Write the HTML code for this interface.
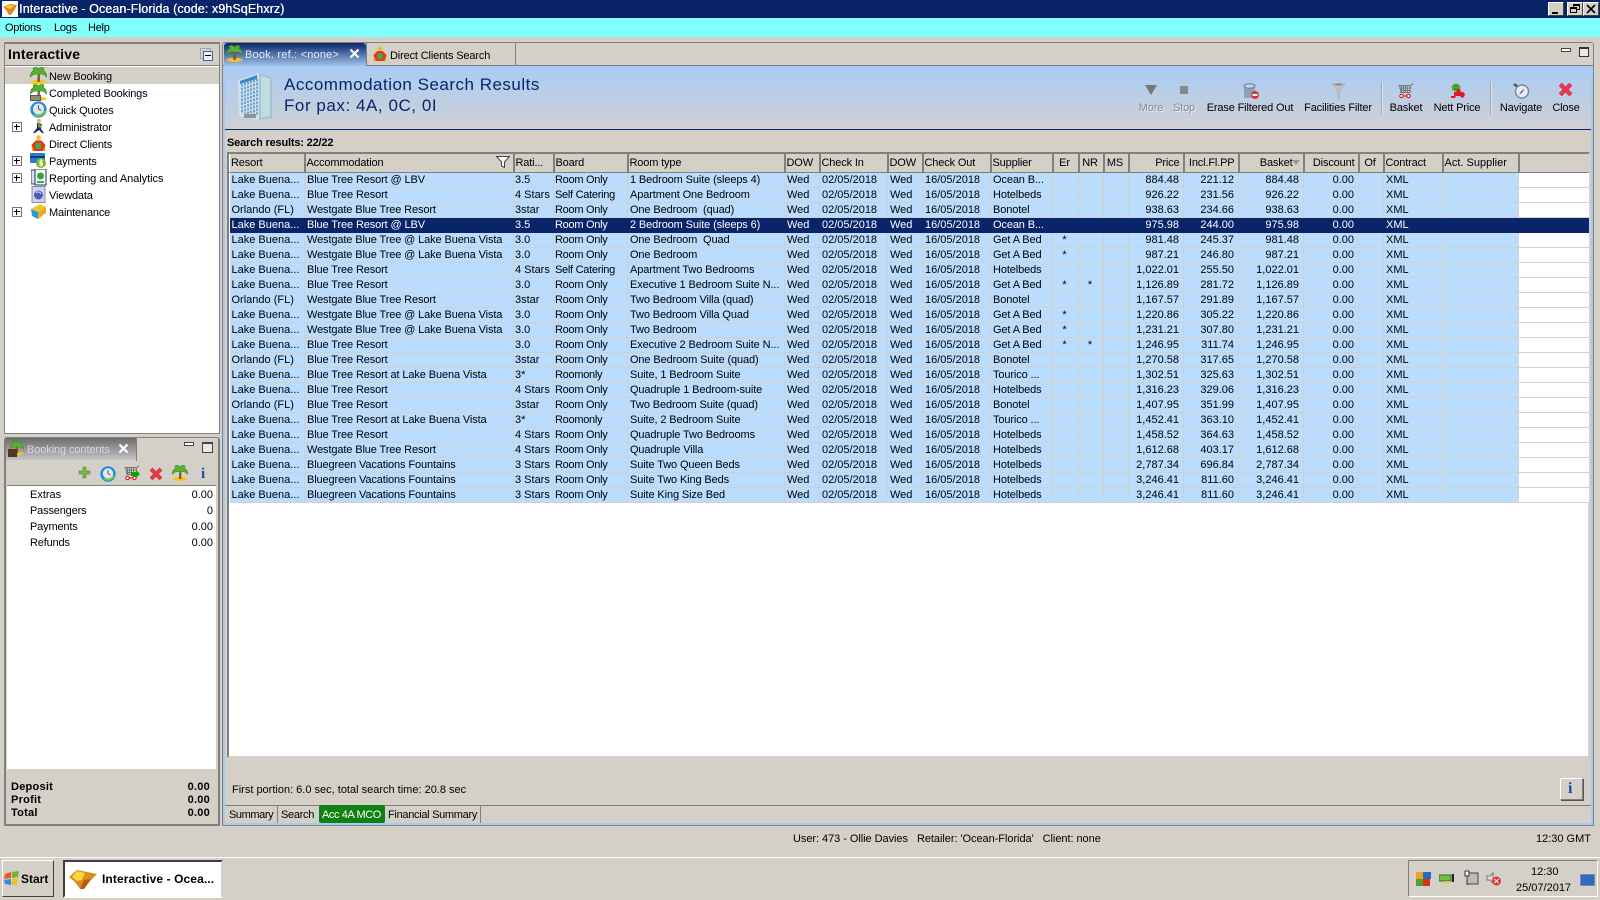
<!DOCTYPE html>
<html><head><meta charset="utf-8"><title>Interactive</title>
<style>
*{box-sizing:border-box}
html,body{margin:0;padding:0}
body{width:1600px;height:900px;overflow:hidden;background:#d4d0c8;position:relative;font:11px "Liberation Sans",sans-serif;color:#000}
.a{position:absolute;white-space:pre;line-height:14px;margin-top:1px}
.m{margin-top:0}
.t{letter-spacing:-.17px}
.i{position:absolute}
#g{position:absolute;left:229px;top:154px;width:1359px;border-collapse:collapse;table-layout:fixed;font-size:11px}
#g th{height:18px;padding:1px 0 0 1px;font-weight:normal;text-align:left;background:#d4d0c8;border-right:2px solid #808080;border-left:1px solid #fff;border-bottom:1px solid #808080;white-space:nowrap;overflow:hidden;letter-spacing:-.15px}
#g th.r{text-align:right;padding:1px 3px 0 0}
#g th.c{text-align:center;padding:1px 2px 0 0}
#g td{height:15px;padding:1px 0 0 2px;line-height:13px;background:#b9dcff;border-right:1px solid #d4d0c8;border-bottom:1px solid #d4d0c8;white-space:pre;overflow:hidden}
#g td:nth-child(2),#g td:nth-child(5),#g td:nth-child(10){letter-spacing:-.12px}
#g td:nth-child(4){letter-spacing:-.28px}
#g td:nth-child(3),#g td:nth-child(4){padding-left:1px}
#g td.r{text-align:right;padding:1px 4px 0 0}
#g td.c{text-align:center;padding:1px 2px 0 0}
#g td.w{background:#fff;border-right:0}
#g tr.s td{background:#0a246a;color:#fff;border-color:#0a246a}
.tb{position:absolute;top:101px;text-align:center;line-height:14px;transform:translateX(-50%);white-space:nowrap;letter-spacing:-.15px}
.dis{color:#8a8a8a;text-shadow:1px 1px 0 #eee}
.pl{position:absolute;left:12px;width:10px;height:10px;border:1px solid #777;background:#fff}
.pl:before{content:"";position:absolute;left:1px;top:3px;width:6px;height:1px;background:#000}
.pl:after{content:"";position:absolute;left:3px;top:1px;width:1px;height:6px;background:#000}
</style></head>
<body>
<svg width="0" height="0" style="position:absolute">
<defs>
<symbol id="palm" viewBox="0 0 16 16"><ellipse cx="8" cy="14" rx="7.500" ry="1.900" fill="#f5c518"/><path d="M7.300 6 L9.200 6 L9.500 14 H6.800 Z" fill="#8a5a20"/><path d="M8 7 C5 6 2 7 0.500 9.500 C0 6 2 3.500 4 3 C2.500 2 2.500 1 4 0.500 C6 0 7.500 1 8 2 C8.500 1 10 0 12 0.500 C13.500 1 13.500 2 12 3 C14 3.500 16 6 15.500 9.500 C14 7 11 6 8 7Z" fill="#58b030" stroke="#2d7a18" stroke-width=".5"/></symbol>
<symbol id="clock" viewBox="0 0 16 16"><circle cx="8" cy="8" r="7.700" fill="#1e8fe0"/><circle cx="8" cy="7.500" r="5.200" fill="#e4e8ee"/><path d="M8 4V7.500L10.500 9" stroke="#555" fill="none"/><path d="M3 13 C7 16 13 15 15.500 9 L12.500 10 C11 12.500 8 13 6 12Z" fill="#7cc544"/></symbol>
<symbol id="client" viewBox="0 0 16 16"><circle cx="8" cy="2.500" r="2.200" fill="#f5b820"/><path d="M1.500 9 L5.500 5 H10.500 L14.500 9 L13 15 H3Z" fill="#e23a12"/><path d="M5.500 7.500H10.500V13H5.500Z" fill="#3dab50"/><path d="M1.500 9L4 15H2Z M14.500 9L12 15H14Z" fill="#f59a12"/></symbol>
<symbol id="x" viewBox="0 0 16 16"><path d="M1 4 L4 1 L8 5 L12 1 L15 4 L11 8 L15 12 L12 15 L8 11 L4 15 L1 12 L5 8Z" fill="#e8384a" stroke="#c02838" stroke-width=".5"/></symbol>
<symbol id="cart" viewBox="0 0 16 16"><path d="M0.500 2.500H12.500L15 .5M1.500 2.500L3 9.500H12L12.500 2.500M3.500 2.500V9.500M5.500 2.500V9.500M7.500 2.500V9.500M9.500 2.500V9.500M2 5H12.500M2.500 7.500H12.500" stroke="#777" fill="none"/><circle cx="3.500" cy="13" r="1.700" fill="#fff" stroke="#d00"/><circle cx="10.500" cy="13" r="1.700" fill="#fff" stroke="#d00"/><path d="M5 13H9" stroke="#d00"/></symbol>
</defs>
</svg>

<!-- title bar -->
<div class="i" style="left:0;top:0;width:1600px;height:18px;background:#0a246a"></div>
<div class="i" style="left:2px;top:1px;width:16px;height:16px;background:#fff"></div>
<svg class="i" style="left:2px;top:2px" width="16" height="14" viewBox="0 0 16 14"><path d="M1 5 L8 2 L15 3 L13 7 L9 13 H7 L4 8Z" fill="#e08a20"/><path d="M3 5L8 3L12 4L8 7Z" fill="#f8d040"/></svg>
<div class="a m" style="left:19px;top:2px;color:#fff;font-size:12.5px;letter-spacing:.09px;text-shadow:.3px 0 0 #fff">Interactive - Ocean-Florida (code: x9hSqEhxrz)</div>
<div class="i" style="left:1548px;top:2px;width:16px;height:14px;background:#d4d0c8;border:1px solid;border-color:#fff #404040 #404040 #fff"><div class="i" style="left:3px;top:9px;width:6px;height:2px;background:#000"></div></div>
<div class="i" style="left:1567px;top:2px;width:16px;height:14px;background:#d4d0c8;border:1px solid;border-color:#fff #404040 #404040 #fff"><div class="i" style="left:5px;top:1px;width:7px;height:6px;border:1px solid #000;border-top-width:2px"></div><div class="i" style="left:2px;top:4px;width:7px;height:6px;border:1px solid #000;border-top-width:2px;background:#d4d0c8"></div></div>
<div class="i" style="left:1583px;top:2px;width:16px;height:14px;background:#d4d0c8;border:1px solid;border-color:#fff #404040 #404040 #fff"><svg class="i" style="left:2px;top:1px" width="10" height="10"><path d="M1 1L9 9M9 1L1 9" stroke="#000" stroke-width="1.600"/></svg></div>

<!-- menu -->
<div class="i" style="left:0;top:18px;width:1600px;height:19px;background:#80ffff"></div>
<div class="a m" style="left:5px;top:21px;letter-spacing:-.25px">Options</div>
<div class="a m" style="left:54px;top:21px;letter-spacing:-.25px">Logs</div>
<div class="a m" style="left:88px;top:21px;letter-spacing:-.25px">Help</div>

<!-- left panel -->
<div class="i" style="left:4px;top:42px;width:216px;height:392px;border:1px solid #808080;border-width:2px 1px 1px 1px;background:#fff"></div>
<div class="i" style="left:5px;top:44px;width:214px;height:22px;background:#d4d0c8;border-bottom:1px solid #808080"></div>
<div class="a m" style="left:8px;top:47px;font-size:14px;font-weight:bold;line-height:15px;letter-spacing:.2px">Interactive</div>
<div class="i" style="left:200px;top:48px;width:11px;height:11px;border:1px solid #9ab"></div>
<div class="i" style="left:203px;top:51px;width:10px;height:10px;border:1px solid #468;background:#eef"><div class="i" style="left:1px;top:3px;width:6px;height:1px;background:#000"></div></div>
<div class="i" style="left:5px;top:67px;width:214px;height:17px;background:#d4d0c8"></div>
<svg class="i" style="left:30px;top:67px" width="17" height="17"><use href="#palm"/></svg>
<div class="a t" style="left:49px;top:69px">New Booking</div>
<svg class="i" style="left:30px;top:84px" width="17" height="17"><use href="#palm"/></svg>
<div class="i" style="left:30px;top:95px;width:11px;height:6px;background:#8a9070;border:1px solid #556"></div>
<div class="a t" style="left:49px;top:86px">Completed Bookings</div>
<svg class="i" style="left:30px;top:101px" width="17" height="17"><use href="#clock"/></svg>
<div class="a t" style="left:49px;top:103px">Quick Quotes</div>
<svg class="i" style="left:32px;top:118px" width="15" height="17" viewBox="0 0 15 17"><circle cx="7" cy="3" r="2" fill="#e8b060"/><path d="M5 5L10 6L9 11L12 15H10L7 12L3 15H1L5 10Z" fill="#1a2a6a"/><path d="M6 6L10 7L9 10L6 9Z" fill="#8a9a20"/></svg>
<div class="a t" style="left:49px;top:120px">Administrator</div>
<svg class="i" style="left:30px;top:135px" width="17" height="17"><use href="#client"/></svg>
<div class="a t" style="left:49px;top:137px">Direct Clients</div>
<svg class="i" style="left:30px;top:152px" width="17" height="17" viewBox="0 0 17 17"><rect x="0" y="1" width="15" height="10" rx="1" fill="#2a78d8"/><rect x="0" y="4" width="15" height="2" fill="#143a80"/><circle cx="11" cy="11" r="5" fill="#7ab828"/><path d="M11 7V15M13 9H10V11H12.500V13H9" stroke="#fff" fill="none"/></svg>
<div class="a t" style="left:49px;top:154px">Payments</div>
<svg class="i" style="left:31px;top:169px" width="16" height="17" viewBox="0 0 16 17"><rect x="0" y="1" width="9" height="14" fill="#dde" stroke="#345"/><rect x="4" y="0" width="11" height="16" fill="#fff" stroke="#234"/><circle cx="9.500" cy="7" r="3.500" fill="#2ca83a"/><rect x="6" y="12" width="7" height="2" fill="#3a7"/></svg>
<div class="a t" style="left:49px;top:171px;letter-spacing:-.05px">Reporting and Analytics</div>
<svg class="i" style="left:31px;top:186px" width="15" height="17" viewBox="0 0 15 17"><rect x="1" y="0.500" width="13" height="16" fill="#cdd6e8" stroke="#88a"/><circle cx="7.500" cy="9" r="4.500" fill="#4a58c0"/><path d="M5 7C7 5 9 6 10 8" stroke="#cde" fill="none"/></svg>
<div class="a t" style="left:49px;top:188px">Viewdata</div>
<svg class="i" style="left:30px;top:203px" width="17" height="17" viewBox="0 0 17 17"><path d="M1 6L10 1L16 4L8 9Z" fill="#f2c42c"/><path d="M1 6L8 9V16L2 13Z" fill="#2a9ad8"/><path d="M8 9L16 4V10L8 16Z" fill="#e8a828"/></svg>
<div class="a t" style="left:49px;top:205px">Maintenance</div>
<div class="pl" style="top:122px"></div>
<div class="pl" style="top:156px"></div>
<div class="pl" style="top:173px"></div>
<div class="pl" style="top:207px"></div>

<!-- booking contents panel -->
<div class="i" style="left:4px;top:437px;width:216px;height:389px;border:1px solid #808080;border-width:1px 2px 2px 2px;border-radius:3px 3px 0 0;background:#d4d0c8"></div>
<div class="i" style="left:6px;top:438px;width:130px;height:22px;background:linear-gradient(#6c6c6c,#c4c4c4)"></div>
<div class="i" style="left:136px;top:438px;width:1px;height:23px;background:#808080"></div>
<svg class="i" style="left:7px;top:441px" width="17" height="17" viewBox="0 0 17 17"><use href="#palm" width="14" height="14" x="3"/><rect x="1" y="8" width="9" height="8" fill="#5a3420"/></svg>
<div class="a" style="left:27px;top:442px;color:#d8d8d8;letter-spacing:-.1px">Booking contents</div>
<svg class="i" style="left:118px;top:443px" width="11" height="11"><path d="M1.500 1.500L9.500 9.500M9.500 1.500L1.500 9.500" stroke="#fff" stroke-width="2.200"/></svg>
<div class="i" style="left:184px;top:442px;width:10px;height:4px;border:1px solid #444;background:#fff"></div>
<div class="i" style="left:202px;top:442px;width:11px;height:11px;border:1px solid #444;border-top-width:2px;background:#e8e8e8"></div>
<div class="i" style="left:7px;top:461px;width:209px;height:25px;background:#d4d0c8;border-bottom:1px solid #808080"></div>
<svg class="i" style="left:78px;top:466px" width="13" height="13"><path d="M5 1H8V5H12V8H8V12H5V8H1V5H5Z" fill="#7ab648" stroke="#4a8a30" stroke-width=".6"/></svg>
<svg class="i" style="left:100px;top:466px" width="16" height="16"><use href="#clock"/></svg>
<svg class="i" style="left:124px;top:465px" width="16" height="16"><use href="#cart"/></svg>
<svg class="i" style="left:131px;top:470px" width="9" height="8"><path d="M0 2H5V0L9 4L5 8V6H0Z" fill="#0a0"/></svg>
<svg class="i" style="left:149px;top:467px" width="14" height="14"><use href="#x"/></svg>
<svg class="i" style="left:172px;top:465px" width="16" height="16"><use href="#palm"/></svg>
<div class="a m" style="left:201px;top:466px;color:#1050a0;font:bold 15px 'Liberation Serif',serif;line-height:16px">i</div>
<div class="i" style="left:7px;top:486px;width:209px;height:283px;background:#fff"></div>
<div class="a" style="left:30px;top:487px">Extras</div><div class="a" style="right:1387px;top:487px">0.00</div>
<div class="a t" style="left:30px;top:503px">Passengers</div><div class="a" style="right:1387px;top:503px">0</div>
<div class="a t" style="left:30px;top:519px">Payments</div><div class="a" style="right:1387px;top:519px">0.00</div>
<div class="a t" style="left:30px;top:535px">Refunds</div><div class="a" style="right:1387px;top:535px">0.00</div>
<div class="a" style="left:11px;top:779px;font-weight:bold;letter-spacing:.25px">Deposit</div><div class="a" style="right:1390px;top:779px;font-weight:bold;letter-spacing:.25px">0.00</div>
<div class="a" style="left:11px;top:792px;font-weight:bold;letter-spacing:.25px">Profit</div><div class="a" style="right:1390px;top:792px;font-weight:bold;letter-spacing:.25px">0.00</div>
<div class="a" style="left:11px;top:805px;font-weight:bold;letter-spacing:.25px">Total</div><div class="a" style="right:1390px;top:805px;font-weight:bold;letter-spacing:.25px">0.00</div>

<!-- main panel -->
<div class="i" style="left:222px;top:42px;width:1372px;height:784px;border:1px solid #808080;border-radius:3px 3px 0 0;background:#d4d0c8"></div>
<div class="i" style="left:223px;top:66px;width:2px;height:759px;background:#a6caf0"></div>
<div class="i" style="left:1591px;top:66px;width:2px;height:759px;background:#a6caf0"></div>
<div class="i" style="left:223px;top:823px;width:1370px;height:2px;background:#a6caf0"></div>
<div class="i" style="left:223px;top:65px;width:1370px;height:1px;background:#808080"></div>
<!-- tabs -->
<div class="i" style="left:224px;top:43px;width:142px;height:24px;background:linear-gradient(#0a246a,#a6caf0);border-radius:3px 3px 0 0"></div>
<svg class="i" style="left:226px;top:45px" width="17" height="17"><use href="#palm"/></svg>
<div class="a m" style="left:245px;top:48px;color:#e8eef8;letter-spacing:.2px">Book. ref.: &lt;none&gt;</div>
<svg class="i" style="left:349px;top:48px" width="11" height="11"><path d="M1.500 1.500L9.500 9.500M9.500 1.500L1.500 9.500" stroke="#fff" stroke-width="2.200"/></svg>
<div class="i" style="left:366px;top:43px;width:150px;height:22px;border-right:1px solid #808080;border-left:1px solid #808080"></div>
<svg class="i" style="left:372px;top:46px" width="16" height="16"><use href="#client"/></svg>
<div class="a" style="left:390px;top:48px;letter-spacing:-.15px">Direct Clients Search</div>
<div class="i" style="left:1561px;top:48px;width:10px;height:4px;border:1px solid #444;background:#fff"></div>
<div class="i" style="left:1579px;top:47px;width:10px;height:10px;border:1px solid #333;border-top-width:2px;background:#e8e8e8"></div>
<!-- header band -->
<div class="i" style="left:225px;top:66px;width:1366px;height:63px;background:linear-gradient(#a8ccf6,#d0d0d4)"></div>
<div class="i" style="left:225px;top:129px;width:1366px;height:1px;background:#0a246a"></div>
<svg class="i" style="left:237px;top:73px" width="36" height="48" viewBox="0 0 36 48"><path d="M1 7 L22 0 V47 L2 43Z" fill="#d4e0e8"/><path d="M22 0 L35 4 V45 L22 47Z" fill="#a8c4cc"/><path d="M24 3L33 6V43L24 45Z" fill="#c0dce0"/><path d="M3 8L20 2V6L3 11Z" fill="#3a8ac8"/><g stroke="#4a94cc" stroke-width="1.500" stroke-dasharray="2.500 1.200"><path d="M5 11V40M8 10V41M11 9V41M14 8V42M17 7V42M20 6V43"/></g><path d="M7 41H19V45H7Z" fill="#8a96a0"/></svg>
<div class="a m" style="left:284px;top:75px;font-size:17px;line-height:20px;color:#0a246a;letter-spacing:.5px">Accommodation Search Results</div>
<div class="a" style="left:284px;top:95px;font-size:17px;line-height:20px;color:#0a246a;letter-spacing:.55px">For pax: 4A, 0C, 0I</div>

<svg class="i" style="left:1145px;top:85px" width="12" height="11"><path d="M0 0H12L9 5L6 10L3 5Z" fill="#777"/></svg>
<div class="tb dis" style="left:1151px">More</div>
<div class="i" style="left:1180px;top:86px;width:8px;height:8px;background:#888"></div>
<div class="tb dis" style="left:1184px">Stop</div>
<svg class="i" style="left:1243px;top:83px" width="16" height="17"><path d="M1 3H12V15H1Z" fill="#8aa4b8"/><ellipse cx="6.500" cy="3" rx="5.500" ry="2.200" fill="#b8d4e4" stroke="#778"/><circle cx="12" cy="12" r="4" fill="#e03030"/><rect x="9.500" y="11" width="5" height="2" fill="#fff"/></svg>
<div class="tb" style="left:1250px">Erase Filtered Out</div>
<svg class="i" style="left:1332px;top:83px" width="13" height="17"><path d="M0 0H13L8 7L7 16H6L5 7Z" fill="#c4c4c4" stroke="#a0a0a0" stroke-width=".6"/><ellipse cx="6.500" cy="1.500" rx="4" ry="1" fill="#888"/></svg>
<div class="tb" style="left:1338px">Facilities Filter</div>
<div class="i" style="left:1381px;top:82px;width:2px;height:32px;background:linear-gradient(90deg,#889,#fff)"></div>
<svg class="i" style="left:1398px;top:83px" width="16" height="16"><use href="#cart"/></svg>
<div class="tb" style="left:1406px">Basket</div>
<svg class="i" style="left:1450px;top:83px" width="16" height="16" viewBox="0 0 16 16"><ellipse cx="6" cy="4.500" rx="4.500" ry="4" fill="#5aa83a"/><path d="M4 3H8M4 6H8" stroke="#2a702a"/><path d="M1 13H4V9H6L8 6H10L11 9H13L15 11L14 14L12 15L10 13H6L5 15H1Z" fill="#e01828"/></svg>
<div class="tb" style="left:1457px">Nett Price</div>
<div class="i" style="left:1490px;top:82px;width:2px;height:32px;background:linear-gradient(90deg,#889,#fff)"></div>
<svg class="i" style="left:1513px;top:83px" width="17" height="17" viewBox="0 0 17 17"><path d="M1 1L5 4" stroke="#555" stroke-width="2.500"/><circle cx="9" cy="8.500" r="6.500" fill="#e4eef6" stroke="#7a8a98" stroke-width="1.500"/><path d="M6 12L8.500 8L12 5L9.500 9Z" fill="#d03020"/><path d="M6 12L8.500 8L9.500 9Z" fill="#2050c0"/></svg>
<div class="tb" style="left:1521px">Navigate</div>
<svg class="i" style="left:1558px;top:82px" width="15" height="15"><use href="#x"/></svg>
<div class="tb" style="left:1566px">Close</div>

<div class="a" style="left:227px;top:135px;font-weight:bold;letter-spacing:-.18px">Search results: 22/22</div>

<!-- grid -->
<div class="i" style="left:227px;top:152px;width:1363px;height:606px;background:#fff;border:2px solid;border-color:#808080 #d4d0c8 #d4d0c8 #808080"></div>
<table id="g">
<colgroup><col style="width:75px"><col style="width:209px"><col style="width:40px"><col style="width:74px"><col style="width:157px"><col style="width:35px"><col style="width:68px"><col style="width:35px"><col style="width:68px"><col style="width:62px"><col style="width:26px"><col style="width:25px"><col style="width:25px"><col style="width:55px"><col style="width:55px"><col style="width:65px"><col style="width:55px"><col style="width:25px"><col style="width:59px"><col style="width:76px"><col style="width:70px"></colgroup>
<tr><th>Resort</th><th>Accommodation</th><th>Rati...</th><th>Board</th><th>Room type</th><th>DOW</th><th>Check In</th><th>DOW</th><th>Check Out</th><th>Supplier</th><th class="c">Er</th><th class="c">NR</th><th class="c">MS</th><th class="r">Price</th><th class="r">Incl.Fl.PP</th><th class="r" style="padding-right:10px">Basket</th><th class="r">Discount</th><th class="c">Of</th><th>Contract</th><th style="letter-spacing:0">Act. Supplier</th><th style="border-right:0"></th></tr>
<tr><td>Lake Buena...</td><td>Blue Tree Resort @ LBV</td><td>3.5</td><td>Room Only</td><td>1 Bedroom Suite (sleeps 4)</td><td>Wed</td><td>02/05/2018</td><td>Wed</td><td>16/05/2018</td><td>Ocean B...</td><td class="c"></td><td class="c"></td><td></td><td class="r">884.48</td><td class="r">221.12</td><td class="r">884.48</td><td class="r">0.00</td><td></td><td>XML</td><td></td><td class="w"></td></tr>
<tr><td>Lake Buena...</td><td>Blue Tree Resort</td><td>4 Stars</td><td>Self Catering</td><td>Apartment One Bedroom</td><td>Wed</td><td>02/05/2018</td><td>Wed</td><td>16/05/2018</td><td>Hotelbeds</td><td class="c"></td><td class="c"></td><td></td><td class="r">926.22</td><td class="r">231.56</td><td class="r">926.22</td><td class="r">0.00</td><td></td><td>XML</td><td></td><td class="w"></td></tr>
<tr><td>Orlando (FL)</td><td>Westgate Blue Tree Resort</td><td>3star</td><td>Room Only</td><td>One Bedroom  (quad)</td><td>Wed</td><td>02/05/2018</td><td>Wed</td><td>16/05/2018</td><td>Bonotel</td><td class="c"></td><td class="c"></td><td></td><td class="r">938.63</td><td class="r">234.66</td><td class="r">938.63</td><td class="r">0.00</td><td></td><td>XML</td><td></td><td class="w"></td></tr>
<tr class="s"><td>Lake Buena...</td><td>Blue Tree Resort @ LBV</td><td>3.5</td><td>Room Only</td><td>2 Bedroom Suite (sleeps 6)</td><td>Wed</td><td>02/05/2018</td><td>Wed</td><td>16/05/2018</td><td>Ocean B...</td><td class="c"></td><td class="c"></td><td></td><td class="r">975.98</td><td class="r">244.00</td><td class="r">975.98</td><td class="r">0.00</td><td></td><td>XML</td><td></td><td class="w"></td></tr>
<tr><td>Lake Buena...</td><td>Westgate Blue Tree @ Lake Buena Vista</td><td>3.0</td><td>Room Only</td><td>One Bedroom  Quad</td><td>Wed</td><td>02/05/2018</td><td>Wed</td><td>16/05/2018</td><td>Get A Bed</td><td class="c">*</td><td class="c"></td><td></td><td class="r">981.48</td><td class="r">245.37</td><td class="r">981.48</td><td class="r">0.00</td><td></td><td>XML</td><td></td><td class="w"></td></tr>
<tr><td>Lake Buena...</td><td>Westgate Blue Tree @ Lake Buena Vista</td><td>3.0</td><td>Room Only</td><td>One Bedroom</td><td>Wed</td><td>02/05/2018</td><td>Wed</td><td>16/05/2018</td><td>Get A Bed</td><td class="c">*</td><td class="c"></td><td></td><td class="r">987.21</td><td class="r">246.80</td><td class="r">987.21</td><td class="r">0.00</td><td></td><td>XML</td><td></td><td class="w"></td></tr>
<tr><td>Lake Buena...</td><td>Blue Tree Resort</td><td>4 Stars</td><td>Self Catering</td><td>Apartment Two Bedrooms</td><td>Wed</td><td>02/05/2018</td><td>Wed</td><td>16/05/2018</td><td>Hotelbeds</td><td class="c"></td><td class="c"></td><td></td><td class="r">1,022.01</td><td class="r">255.50</td><td class="r">1,022.01</td><td class="r">0.00</td><td></td><td>XML</td><td></td><td class="w"></td></tr>
<tr><td>Lake Buena...</td><td>Blue Tree Resort</td><td>3.0</td><td>Room Only</td><td>Executive 1 Bedroom Suite N...</td><td>Wed</td><td>02/05/2018</td><td>Wed</td><td>16/05/2018</td><td>Get A Bed</td><td class="c">*</td><td class="c">*</td><td></td><td class="r">1,126.89</td><td class="r">281.72</td><td class="r">1,126.89</td><td class="r">0.00</td><td></td><td>XML</td><td></td><td class="w"></td></tr>
<tr><td>Orlando (FL)</td><td>Westgate Blue Tree Resort</td><td>3star</td><td>Room Only</td><td>Two Bedroom Villa (quad)</td><td>Wed</td><td>02/05/2018</td><td>Wed</td><td>16/05/2018</td><td>Bonotel</td><td class="c"></td><td class="c"></td><td></td><td class="r">1,167.57</td><td class="r">291.89</td><td class="r">1,167.57</td><td class="r">0.00</td><td></td><td>XML</td><td></td><td class="w"></td></tr>
<tr><td>Lake Buena...</td><td>Westgate Blue Tree @ Lake Buena Vista</td><td>3.0</td><td>Room Only</td><td>Two Bedroom Villa Quad</td><td>Wed</td><td>02/05/2018</td><td>Wed</td><td>16/05/2018</td><td>Get A Bed</td><td class="c">*</td><td class="c"></td><td></td><td class="r">1,220.86</td><td class="r">305.22</td><td class="r">1,220.86</td><td class="r">0.00</td><td></td><td>XML</td><td></td><td class="w"></td></tr>
<tr><td>Lake Buena...</td><td>Westgate Blue Tree @ Lake Buena Vista</td><td>3.0</td><td>Room Only</td><td>Two Bedroom</td><td>Wed</td><td>02/05/2018</td><td>Wed</td><td>16/05/2018</td><td>Get A Bed</td><td class="c">*</td><td class="c"></td><td></td><td class="r">1,231.21</td><td class="r">307.80</td><td class="r">1,231.21</td><td class="r">0.00</td><td></td><td>XML</td><td></td><td class="w"></td></tr>
<tr><td>Lake Buena...</td><td>Blue Tree Resort</td><td>3.0</td><td>Room Only</td><td>Executive 2 Bedroom Suite N...</td><td>Wed</td><td>02/05/2018</td><td>Wed</td><td>16/05/2018</td><td>Get A Bed</td><td class="c">*</td><td class="c">*</td><td></td><td class="r">1,246.95</td><td class="r">311.74</td><td class="r">1,246.95</td><td class="r">0.00</td><td></td><td>XML</td><td></td><td class="w"></td></tr>
<tr><td>Orlando (FL)</td><td>Blue Tree Resort</td><td>3star</td><td>Room Only</td><td>One Bedroom Suite (quad)</td><td>Wed</td><td>02/05/2018</td><td>Wed</td><td>16/05/2018</td><td>Bonotel</td><td class="c"></td><td class="c"></td><td></td><td class="r">1,270.58</td><td class="r">317.65</td><td class="r">1,270.58</td><td class="r">0.00</td><td></td><td>XML</td><td></td><td class="w"></td></tr>
<tr><td>Lake Buena...</td><td>Blue Tree Resort at Lake Buena Vista</td><td>3*</td><td>Roomonly</td><td>Suite, 1 Bedroom Suite</td><td>Wed</td><td>02/05/2018</td><td>Wed</td><td>16/05/2018</td><td>Tourico ...</td><td class="c"></td><td class="c"></td><td></td><td class="r">1,302.51</td><td class="r">325.63</td><td class="r">1,302.51</td><td class="r">0.00</td><td></td><td>XML</td><td></td><td class="w"></td></tr>
<tr><td>Lake Buena...</td><td>Blue Tree Resort</td><td>4 Stars</td><td>Room Only</td><td>Quadruple 1 Bedroom-suite</td><td>Wed</td><td>02/05/2018</td><td>Wed</td><td>16/05/2018</td><td>Hotelbeds</td><td class="c"></td><td class="c"></td><td></td><td class="r">1,316.23</td><td class="r">329.06</td><td class="r">1,316.23</td><td class="r">0.00</td><td></td><td>XML</td><td></td><td class="w"></td></tr>
<tr><td>Orlando (FL)</td><td>Blue Tree Resort</td><td>3star</td><td>Room Only</td><td>Two Bedroom Suite (quad)</td><td>Wed</td><td>02/05/2018</td><td>Wed</td><td>16/05/2018</td><td>Bonotel</td><td class="c"></td><td class="c"></td><td></td><td class="r">1,407.95</td><td class="r">351.99</td><td class="r">1,407.95</td><td class="r">0.00</td><td></td><td>XML</td><td></td><td class="w"></td></tr>
<tr><td>Lake Buena...</td><td>Blue Tree Resort at Lake Buena Vista</td><td>3*</td><td>Roomonly</td><td>Suite, 2 Bedroom Suite</td><td>Wed</td><td>02/05/2018</td><td>Wed</td><td>16/05/2018</td><td>Tourico ...</td><td class="c"></td><td class="c"></td><td></td><td class="r">1,452.41</td><td class="r">363.10</td><td class="r">1,452.41</td><td class="r">0.00</td><td></td><td>XML</td><td></td><td class="w"></td></tr>
<tr><td>Lake Buena...</td><td>Blue Tree Resort</td><td>4 Stars</td><td>Room Only</td><td>Quadruple Two Bedrooms</td><td>Wed</td><td>02/05/2018</td><td>Wed</td><td>16/05/2018</td><td>Hotelbeds</td><td class="c"></td><td class="c"></td><td></td><td class="r">1,458.52</td><td class="r">364.63</td><td class="r">1,458.52</td><td class="r">0.00</td><td></td><td>XML</td><td></td><td class="w"></td></tr>
<tr><td>Lake Buena...</td><td>Westgate Blue Tree Resort</td><td>4 Stars</td><td>Room Only</td><td>Quadruple Villa</td><td>Wed</td><td>02/05/2018</td><td>Wed</td><td>16/05/2018</td><td>Hotelbeds</td><td class="c"></td><td class="c"></td><td></td><td class="r">1,612.68</td><td class="r">403.17</td><td class="r">1,612.68</td><td class="r">0.00</td><td></td><td>XML</td><td></td><td class="w"></td></tr>
<tr><td>Lake Buena...</td><td>Bluegreen Vacations Fountains</td><td>3 Stars</td><td>Room Only</td><td>Suite Two Queen Beds</td><td>Wed</td><td>02/05/2018</td><td>Wed</td><td>16/05/2018</td><td>Hotelbeds</td><td class="c"></td><td class="c"></td><td></td><td class="r">2,787.34</td><td class="r">696.84</td><td class="r">2,787.34</td><td class="r">0.00</td><td></td><td>XML</td><td></td><td class="w"></td></tr>
<tr><td>Lake Buena...</td><td>Bluegreen Vacations Fountains</td><td>3 Stars</td><td>Room Only</td><td>Suite Two King Beds</td><td>Wed</td><td>02/05/2018</td><td>Wed</td><td>16/05/2018</td><td>Hotelbeds</td><td class="c"></td><td class="c"></td><td></td><td class="r">3,246.41</td><td class="r">811.60</td><td class="r">3,246.41</td><td class="r">0.00</td><td></td><td>XML</td><td></td><td class="w"></td></tr>
<tr><td>Lake Buena...</td><td>Bluegreen Vacations Fountains</td><td>3 Stars</td><td>Room Only</td><td>Suite King Size Bed</td><td>Wed</td><td>02/05/2018</td><td>Wed</td><td>16/05/2018</td><td>Hotelbeds</td><td class="c"></td><td class="c"></td><td></td><td class="r">3,246.41</td><td class="r">811.60</td><td class="r">3,246.41</td><td class="r">0.00</td><td></td><td>XML</td><td></td><td class="w"></td></tr>
</table>
<svg class="i" style="left:496px;top:156px" width="14" height="12"><path d="M.5 .5H13.500L8.500 6V11.500L5.500 10V6Z" fill="#fff" stroke="#444"/></svg>
<svg class="i" style="left:1292px;top:160px" width="8" height="5"><path d="M0 0H8L4 5Z" fill="#999"/></svg>

<!-- bottom of main -->
<div class="a" style="left:232px;top:782px">First portion: 6.0 sec, total search time: 20.8 sec</div>
<div class="i" style="left:1560px;top:778px;width:23px;height:22px;background:#d4d0c8;border:1px solid;border-color:#fff #808080 #808080 #fff;box-shadow:1px 1px 0 #555"></div>
<div class="a m" style="left:1568px;top:781px;color:#1050a0;font:bold 16px 'Liberation Serif',serif;line-height:16px">i</div>
<div class="i" style="left:225px;top:805px;width:1366px;height:1px;background:#808080"></div>
<div class="i" style="left:277px;top:806px;width:1px;height:17px;background:#808080"></div>
<div class="i" style="left:480px;top:806px;width:1px;height:17px;background:#808080"></div>
<div class="i" style="left:319px;top:805px;width:66px;height:18px;background:#108010;border-radius:2px"></div>
<div class="a" style="left:229px;top:807px;letter-spacing:-.4px">Summary</div>
<div class="a" style="left:281px;top:807px;letter-spacing:-.3px">Search</div>
<div class="a" style="left:322px;top:807px;color:#fff;letter-spacing:-.4px">Acc 4A MCO</div>
<div class="a" style="left:388px;top:807px;letter-spacing:-.3px">Financial Summary</div>

<!-- status -->
<div class="a" style="left:793px;top:831px;letter-spacing:-.05px">User: 473 - Ollie Davies   Retailer: 'Ocean-Florida'   Client: none</div>
<div class="a" style="right:9px;top:831px">12:30 GMT</div>

<!-- taskbar -->
<div class="i" style="left:0;top:857px;width:1600px;height:1px;background:#fff"></div>
<div class="i" style="left:2px;top:860px;width:52px;height:37px;background:#d4d0c8;border:1px solid;border-color:#fff #404040 #404040 #fff"></div>
<svg class="i" style="left:4px;top:871px" width="16" height="15" viewBox="0 0 16 15"><path d="M1 3L7 1V7L0 8Z" fill="#e8582a"/><path d="M8 1L15 0L14 6L8 7Z" fill="#6ab82c"/><path d="M0 9L7 8V14L1 13Z" fill="#3a8ae0"/><path d="M8 8L14 7L13 14L8 14Z" fill="#f5c020"/></svg>
<div class="a m" style="left:21px;top:872px;font-size:12px;font-weight:bold">Start</div>
<div class="i" style="left:63px;top:860px;width:160px;height:38px;background:#fff;border:2px solid;border-color:#404040 #d4d0c8 #fff #404040"></div>
<svg class="i" style="left:69px;top:869px" width="28" height="21" viewBox="0 0 28 21"><path d="M0 8L8 1L18 3L28 5L22 11L15 20H11L6 13Z" fill="#dc8a22"/><path d="M3 8L8 2L16 4L13 11L8 12Z" fill="#f8d838"/><path d="M11 20L15 11L22 10L15 20Z" fill="#b85a10"/></svg>
<div class="a m" style="left:102px;top:872px;font-size:12px;font-weight:bold;letter-spacing:.1px">Interactive - Ocea...</div>
<div class="i" style="left:1408px;top:860px;width:190px;height:37px;border:1px solid;border-color:#808080 #fff #fff #808080"></div>
<svg class="i" style="left:1415px;top:871px" width="16" height="16" viewBox="0 0 16 16"><path d="M1 1H8V8H1Z" fill="#f5a020"/><path d="M8 1H16V8H8Z" fill="#2070c0"/><path d="M1 8H8V15H1Z" fill="#50a030"/><path d="M8 8H15V15H8Z" fill="#d83020"/></svg>
<svg class="i" style="left:1439px;top:874px" width="16" height="10" viewBox="0 0 16 10"><rect x="0" y="1" width="12" height="6" fill="#70c040" stroke="#264"/><rect x="5" y="7" width="6" height="2" fill="#e8c020"/><rect x="13" y="0" width="2" height="8" fill="#222"/></svg>
<svg class="i" style="left:1463px;top:870px" width="16" height="17" viewBox="0 0 16 17"><rect x="4" y="3" width="11" height="11" fill="#bbb" stroke="#444"/><path d="M2 1H6V6H4V15M2 1V6H4" fill="#fff" stroke="#333"/></svg>
<svg class="i" style="left:1486px;top:871px" width="16" height="15" viewBox="0 0 16 15"><path d="M1 5H4L7 2V12L4 9H1Z" fill="#ddd" stroke="#777"/><circle cx="10.500" cy="10" r="4.500" fill="#e03838"/><path d="M8.500 8L12.500 12M12.500 8L8.500 12" stroke="#fff"/></svg>
<div class="a" style="left:1531px;top:864px">12:30</div>
<div class="a" style="left:1516px;top:880px">25/07/2017</div>
<div class="i" style="left:1580px;top:874px;width:15px;height:12px;background:#2a6ac0;border:1px solid #889"></div>
</body></html>
